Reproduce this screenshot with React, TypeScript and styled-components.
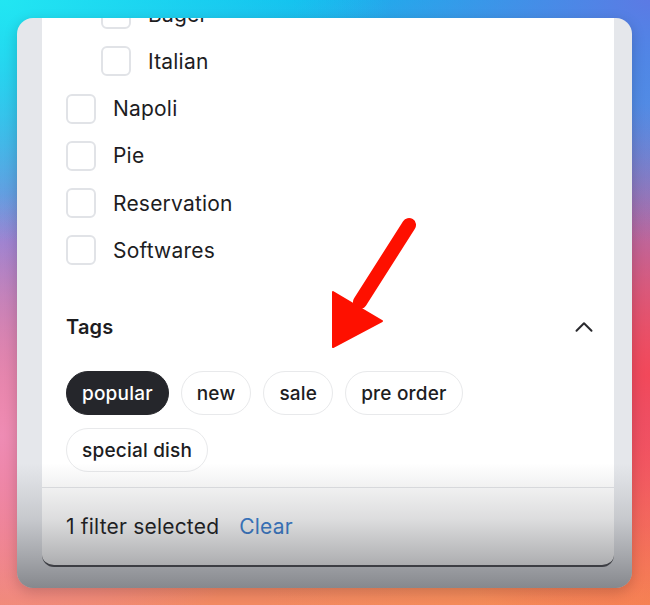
import React from "react";
import styled, { createGlobalStyle } from "styled-components";
import { ChevronUp } from "lucide-react";

const GlobalStyle = createGlobalStyle`
  html, body {
    margin: 0;
    padding: 0;
  }
  body {
    width: 650px;
    height: 605px;
    overflow: hidden;
    font-family: "Inter", "Noto Sans", sans-serif;
  }
`;

// wallpaper behind the window
const Desktop = styled.div`
  position: relative;
  width: 650px;
  height: 605px;
  padding: 18px 18px 0 17px;
  box-sizing: border-box;
  background:
    radial-gradient(ellipse 60% 40% at 0% 0%, #22e6f2 0%, rgba(34, 230, 242, 0) 100%),
    radial-gradient(ellipse 55% 40% at 100% 0%, #5c7ae4 0%, rgba(92, 122, 228, 0) 100%),
    radial-gradient(ellipse 45% 45% at 100% 62%, #f2485a 0%, rgba(242, 72, 90, 0) 100%),
    radial-gradient(ellipse 45% 40% at 0% 72%, #ee8cb4 0%, rgba(238, 140, 180, 0) 100%),
    radial-gradient(ellipse 60% 30% at 100% 100%, #f68c52 0%, rgba(246, 140, 82, 0) 100%),
    linear-gradient(180deg, #10b8ee 0%, #8c82d8 40%, #ee6a78 75%, #f28a62 100%);
`;

const Window = styled.div`
  position: relative;
  width: 615px;
  height: 570px;
  box-sizing: border-box;
  padding: 0 18px 21px 25px;
  display: flex;
  border-radius: 16px;
  background: #e5e7eb;
  overflow: hidden;
  box-shadow: 0 4px 14px rgba(0, 0, 0, 0.18);
`;

const Panel = styled.div`
  flex: 1;
  display: flex;
  flex-direction: column;
  background: #ffffff;
  border-bottom: 2px solid #4a4b50;
  border-radius: 0 0 12px 12px;
  overflow: hidden;
`;

const Body = styled.div`
  flex: 1;
  overflow: hidden;
  padding: 0 15px 0 24px;
`;

const List = styled.div`
  display: flex;
  flex-direction: column;
  gap: 17.3px;
  margin-top: -19px;
`;

const Row = styled.label<{ $nested?: boolean }>`
  display: flex;
  align-items: center;
  gap: 17px;
  height: 30px;
  padding-left: ${(p) => (p.$nested ? "35px" : "0")};
  font-size: 21px;
  letter-spacing: 0.2px;
  color: #1d1d1f;
`;

const Box = styled.span`
  width: 30px;
  height: 30px;
  box-sizing: border-box;
  border: 2px solid #e1e3e7;
  border-radius: 6px;
  background: #fff;
  flex-shrink: 0;
`;

const SectionHead = styled.div`
  display: flex;
  align-items: center;
  justify-content: space-between;
  height: 30px;
  margin-top: 47px;
  color: #1d1d1f;
`;

const SectionTitle = styled.h3`
  margin: 0;
  font-size: 20px;
  font-weight: 600;
  letter-spacing: 0.2px;
`;

const Pills = styled.div`
  display: flex;
  flex-wrap: wrap;
  gap: 13px 12px;
  margin-top: 29px;
  padding-right: 9px;
`;

const Pill = styled.button<{ $active?: boolean }>`
  height: 44px;
  padding: 0 15px;
  border-radius: 22px;
  border: 1.5px solid ${(p) => (p.$active ? "#25262b" : "#e8e9eb")};
  background: ${(p) => (p.$active ? "#25262b" : "#ffffff")};
  color: ${(p) => (p.$active ? "#ffffff" : "#1d1d1f")};
  font-family: "Inter", sans-serif;
  font-size: 19px;
  font-weight: 500;
  letter-spacing: 0.2px;
  cursor: pointer;
`;

const Footer = styled.div`
  height: 77px;
  border-top: 1px solid #e4e5e8;
  display: flex;
  align-items: center;
  gap: 20px;
  padding: 0 24px;
  font-size: 21px;
  letter-spacing: 0.2px;
  color: #1d1d1f;
`;

const ClearLink = styled.a`
  color: #3b7fd2;
  cursor: pointer;
`;

// dim fade over the lower part of the window
const Fade = styled.div`
  position: absolute;
  left: 0;
  right: 0;
  bottom: 0;
  height: 125px;
  pointer-events: none;
  background: linear-gradient(
    180deg,
    rgba(40, 42, 48, 0) 0%,
    rgba(40, 42, 48, 0.05) 15%,
    rgba(40, 42, 48, 0.16) 45%,
    rgba(40, 42, 48, 0.34) 75%,
    rgba(40, 42, 48, 0.5) 100%
  );
`;

const Arrow = styled.svg`
  position: absolute;
  left: 320px;
  top: 210px;
  width: 100px;
  height: 145px;
  pointer-events: none;
`;

const categories = [
  { name: "Bagel", nested: true },
  { name: "Italian", nested: true },
  { name: "Napoli" },
  { name: "Pie" },
  { name: "Reservation" },
  { name: "Softwares" },
];

const tags = ["popular", "new", "sale", "pre order", "special dish"];

export default function App() {
  return (
    <Desktop>
      <GlobalStyle />
      <Window>
        <Panel>
          <Body>
            <List>
              {categories.map((c) => (
                <Row key={c.name} $nested={c.nested}>
                  <Box />
                  {c.name}
                </Row>
              ))}
            </List>
            <SectionHead>
              <SectionTitle>Tags</SectionTitle>
              <ChevronUp size={30} strokeWidth={1.6} color="#2a2a2e" />
            </SectionHead>
            <Pills>
              {tags.map((t) => (
                <Pill key={t} $active={t === "popular"}>
                  {t}
                </Pill>
              ))}
            </Pills>
          </Body>
          <Footer>
            <span>1 filter selected</span>
            <ClearLink>Clear</ClearLink>
          </Footer>
        </Panel>
        <Fade />
      </Window>
      <Arrow viewBox="320 210 100 145">
        <line x1="409" y1="225" x2="360" y2="302" stroke="#fe1000" strokeWidth="14" strokeLinecap="round" />
        <polygon points="333,292 382,321 333,347" fill="#fe1000" stroke="#fe1000" strokeWidth="2" strokeLinejoin="round" />
      </Arrow>
    </Desktop>
  );
}
